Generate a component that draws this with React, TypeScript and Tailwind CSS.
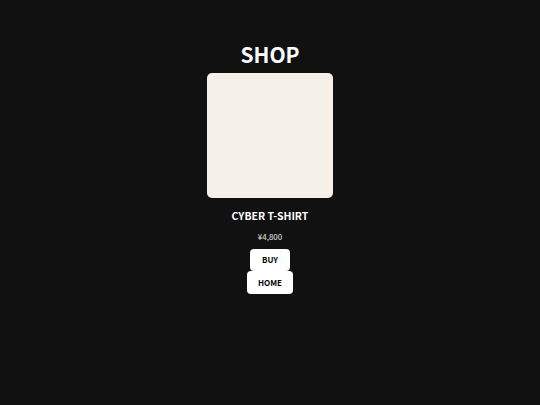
export default function App() {
  return (
    <div
      className="min-h-[405px] w-full bg-[#111111] flex flex-col items-center pt-[40px] text-white"
      style={{ fontFamily: '"Noto Sans CJK JP", "Noto Sans", sans-serif' }}
    >
      <h1 className="text-[21px] leading-[28px] font-bold">SHOP</h1>
      <div className="mt-[5px] w-[126px] h-[125px] rounded-[5px] bg-[#f5f1e8]" />
      <h2 className="mt-[10px] text-[10.5px] leading-[16px] font-bold">CYBER T-SHIRT</h2>
      <p className="mt-[7px] text-[8px] leading-[12px] text-[#e5e5e5]">¥4,800</p>
      <button className="mt-[6px] h-[22px] w-[40px] rounded-[4px] bg-white text-black text-[8px] font-bold">
        BUY
      </button>
      <button className="h-[23px] w-[46px] rounded-[4px] bg-white text-black text-[8px] font-bold">
        HOME
      </button>
    </div>
  );
}
